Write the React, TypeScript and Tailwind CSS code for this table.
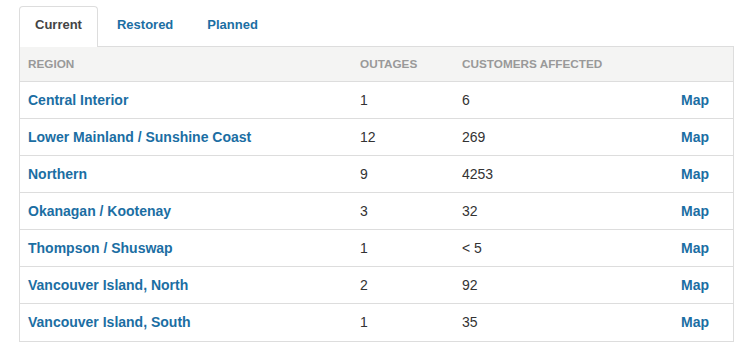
import React from "react";

const rows = [
  { region: "Central Interior", outages: "1", customers: "6" },
  { region: "Lower Mainland / Sunshine Coast", outages: "12", customers: "269" },
  { region: "Northern", outages: "9", customers: "4253" },
  { region: "Okanagan / Kootenay", outages: "3", customers: "32" },
  { region: "Thompson / Shuswap", outages: "1", customers: "< 5" },
  { region: "Vancouver Island, North", outages: "2", customers: "92" },
  { region: "Vancouver Island, South", outages: "1", customers: "35" },
];

const cols = "grid grid-cols-[332px_102px_219px_1fr]";

const App = () => {
  return (
    <div
      className="w-[740px] h-[350px] bg-white pl-[19px] pt-[6px]"
      style={{ fontFamily: '"Liberation Sans", Arial, sans-serif' }}
    >
      <div className="w-[715px]">
        <ul className="flex text-[13px] font-bold">
          <li className="relative z-10 -mb-px h-[41px] flex items-center pb-[4px] px-[15px] bg-white border border-b-0 border-[#ddd] rounded-t-[4px] text-[#444] mr-[3px]">
            Current
          </li>
          <li className="h-[40px] flex items-center pb-[3px] px-[16px] text-[#1b6ea3] mr-[2px]">
            Restored
          </li>
          <li className="h-[40px] flex items-center pb-[3px] px-[16px] text-[#1b6ea3]">
            Planned
          </li>
        </ul>
        <div className="border border-[#ddd]">
          <div
            className={`${cols} h-[35px] items-center bg-[#f4f4f3] border-b border-[#ddd] text-[11.75px] font-bold text-[#999] uppercase`}
          >
            <div className="pl-[8px]">Region</div>
            <div className="pl-[8px]">Outages</div>
            <div className="pl-[8px]">Customers Affected</div>
            <div />
          </div>
          {rows.map((r, i) => (
            <div
              key={r.region}
              className={`${cols} h-[37px] items-center text-[14px] ${
                i < rows.length - 1 ? "border-b border-[#ddd]" : ""
              }`}
            >
              <a className="pl-[8px] font-bold text-[#1b6ea3]">{r.region}</a>
              <div className="pl-[8px] text-[#333]">{r.outages}</div>
              <div className="pl-[8px] text-[#333]">{r.customers}</div>
              <a className="pl-[8px] font-bold text-[#1b6ea3]">Map</a>
            </div>
          ))}
        </div>
      </div>
    </div>
  );
};

export default App;
